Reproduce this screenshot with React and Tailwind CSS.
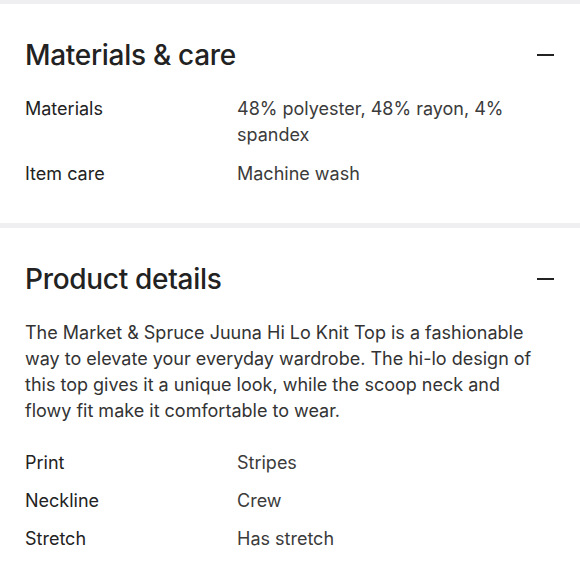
import React from "react";

function Minus() {
  return (
    <svg width="18" height="18" viewBox="0 0 18 18" className="shrink-0">
      <path d="M1 9h17" stroke="#222" strokeWidth="2" />
    </svg>
  );
}

function Section({ title, children, className = "" }) {
  return (
    <section className={`bg-white px-[25px] pt-[34px] ${className}`}>
      <div className="flex items-center justify-between h-[34px]">
        <h2 className="text-[28px] font-medium text-[#222] tracking-[-0.3px]">{title}</h2>
        <div className="mr-[1px]">
          <Minus />
        </div>
      </div>
      {children}
    </section>
  );
}

function Row({ label, value }) {
  return (
    <div className="grid grid-cols-[212px_1fr] leading-[26px]">
      <div className="text-[#222]">{label}</div>
      <div className="text-[#3b3b3b] max-w-[270px]">{value}</div>
    </div>
  );
}

export default function App() {
  return (
    <div
      className="w-[580px] h-[580px] overflow-hidden bg-[#efeff1] pt-[4px] text-[18px]"
      style={{ fontFamily: "Inter, 'Noto Sans', sans-serif" }}
    >
      <Section title="Materials & care" className="h-[219px]">
        <div className="mt-[24px] flex flex-col gap-[13px]">
          <Row label="Materials" value="48% polyester, 48% rayon, 4% spandex" />
          <Row label="Item care" value="Machine wash" />
        </div>
      </Section>
      <Section title="Product details" className="mt-[5px] h-[400px]">
        <p className="mt-[24px] leading-[26px] text-[#333]">
          The Market &amp; Spruce Juuna Hi Lo Knit Top is a fashionable
          <br />
          way to elevate your everyday wardrobe. The hi-lo design of
          <br />
          this top gives it a unique look, while the scoop neck and
          <br />
          flowy fit make it comfortable to wear.
        </p>
        <div className="mt-[26px] flex flex-col gap-[12px]">
          <Row label="Print" value="Stripes" />
          <Row label="Neckline" value="Crew" />
          <Row label="Stretch" value="Has stretch" />
        </div>
      </Section>
    </div>
  );
}
